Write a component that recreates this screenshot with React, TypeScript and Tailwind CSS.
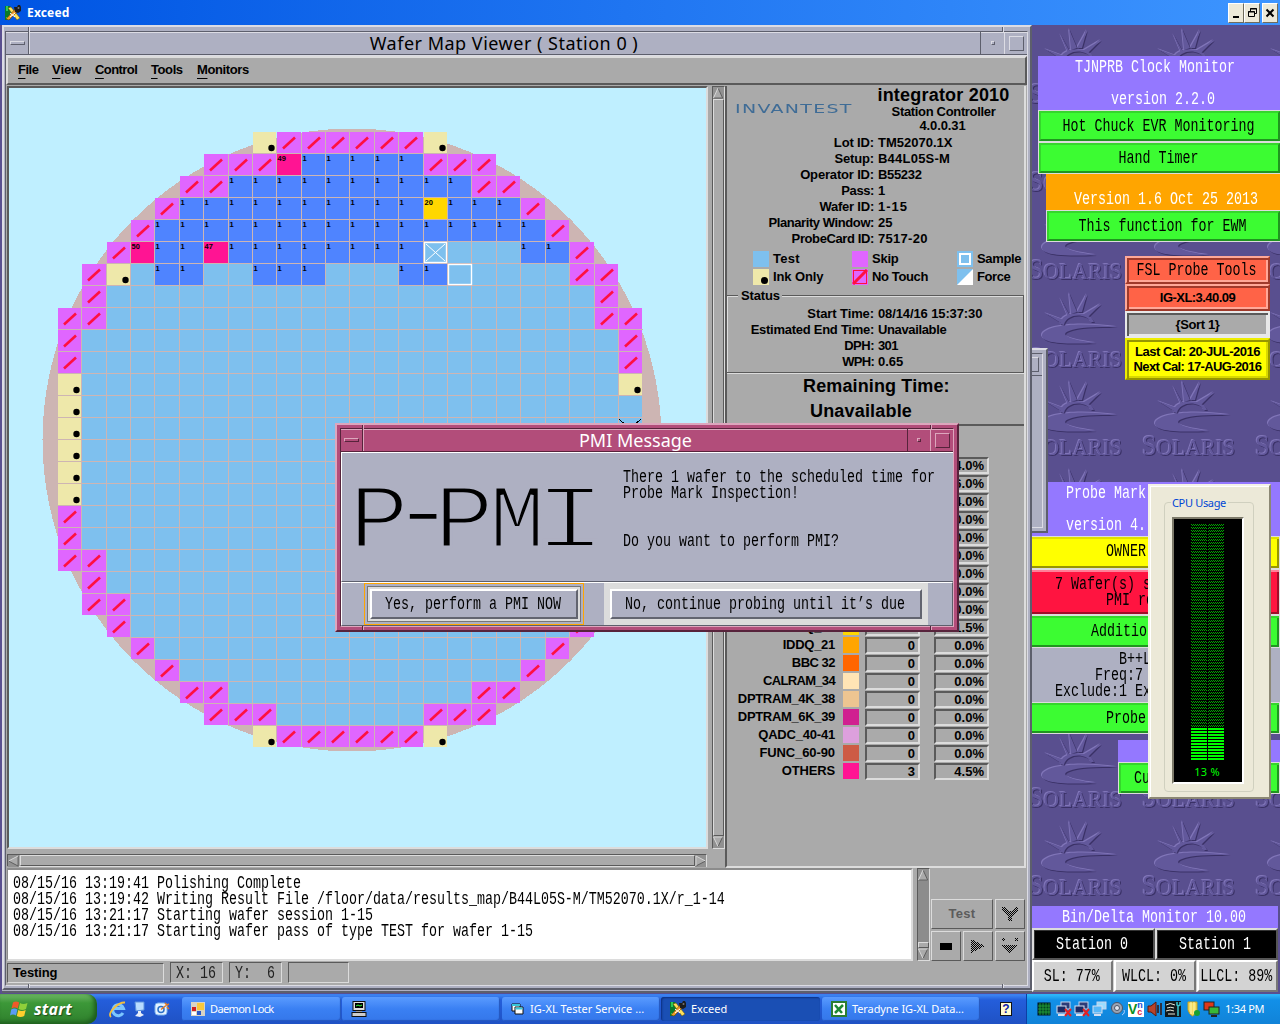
import React, { useLayoutEffect, useRef, useState } from "react";

/* ---------- text helpers ---------- */

// Spreads its text over a fixed width by adjusting letter spacing.
function Fit({ w, children, className = "" }: { w: number; children: string; className?: string }) {
  const ref = useRef<HTMLSpanElement>(null);
  const [ls, setLs] = useState(0);
  useLayoutEffect(() => {
    if (ref.current) {
      const natural = ref.current.offsetWidth;
      setLs((w - natural) / Math.max(1, children.length));
    }
  }, []);
  return (
    <span ref={ref} className={"inline-block shrink-0 whitespace-pre " + className} style={{ letterSpacing: ls }}>
      {children}
    </span>
  );
}

function M({ children, className = "" }: { children: string; className?: string }) {
  return (
    <span
      className={
        "block h-4 w-max shrink-0 origin-[50%_40%] scale-y-[1.36] font-['Liberation_Mono',monospace] text-[13.33px] leading-4 whitespace-pre " +
        className
      }
    >
      {children}
    </span>
  );
}

function B({ w, children, className = "" }: { w: number; children: string; className?: string }) {
  return (
    <Fit w={w} className={"font-['Liberation_Sans',sans-serif] text-[13px] leading-4 font-bold " + className}>
      {children}
    </Fit>
  );
}

/* ---------- wafer map ---------- */

type Kind = "t" | "s" | "i" | "b" | "p" | "g";
const FILL: Record<Kind, string> = {
  t: "#7ec0ee",
  s: "#e066ff",
  i: "#eee8aa",
  b: "#4f84ff",
  p: "#ff1493",
  g: "#ffd700",
};

// One string per row; a dot is a position off the wafer.
const ROWS = [
  "........issssssi........",
  "......ssspbbbbbsss......",
  ".....ssbbbbbbbbbbss.....",
  "....sbbbbbbbbbbgbbbs....",
  "...sbbbbbbbbbbbbbbbbs...",
  "..spbbpbbbbbbbbttttbbs..",
  ".sitbbttbbbtttbbtttttss.",
  ".stttttttttttttttttttts.",
  "ssttttttttttttttttttttss",
  "stttttttttttttttttttttts",
  "stttttttttttttttttttttts",
  "itttttttttttttttttttttti",
  "ittttttttttttttttttttttt",
  "ittttttttttttttttttttttt",
  "itttttttttttttttttttttti",
  "itttttttttttttttttttttti",
  "itttttttttttttttttttttti",
  "stttttttttttttttttttttts",
  "stttttttttttttttttttttts",
  "ssttttttttttttttttttttss",
  ".stttttttttttttttttttts.",
  ".ssttttttttttttttttttss.",
  "..stttttttttttttttttts..",
  "...stttttttttttttttts...",
  "....stttttttttttttts....",
  ".....ssttttttttttss.....",
  "......sssttttttsss......",
  "........issssssi........",
];

const LABELS: Record<string, string> = { "1-9": "49", "3-15": "20", "5-3": "50", "5-6": "47" };
const colX = (c: number) => Math.round(57.7 + 24.4 * c);

function WaferMap() {
  return (
    <svg width="697" height="759" className="block bg-[#bfefff]" shapeRendering="crispEdges">
      <g transform="translate(-9 -88)">
        <ellipse cx="352" cy="440" rx="309.500" ry="311.500" fill="#cdb5b3" />
        {ROWS.map((row, r) =>
          row.split("").map((k, c) => {
            if (k === ".") return null;
            const x = colX(c);
            const w = colX(c + 1) - x - 1;
            const y = 132 + 22 * r;
            const label = LABELS[r + "-" + c] ?? (k === "b" ? "1" : null);
            return (
              <g key={r + "-" + c}>
                <rect x={x} y={y} width={w} height={21} fill={FILL[k as Kind]} />
                {k === "s" && (
                  <path
                    d={`M${x + 6} ${y + 16.5}L${x + 18} ${y + 5.5}`}
                    stroke="#ff1040"
                    strokeWidth="2.600"
                    shapeRendering="auto"
                  />
                )}
                {k === "i" && <circle cx={x + w - 4.5} cy={y + 16} r="3.200" fill="#000" shapeRendering="auto" />}
                {label && (
                  <text
                    x={x + 0.5}
                    y={y + 6.5}
                    fontSize="7.500"
                    fontWeight="bold"
                    fontFamily="'Liberation Sans', sans-serif"
                    fill="#000"
                  >
                    {label}
                  </text>
                )}
              </g>
            );
          }),
        )}
        {ROWS.slice(0, -1).map((row, r) => {
          const cols = row
            .split("")
            .map((k, c) => (k !== "." && ROWS[r + 1][c] !== "." ? c : -1))
            .filter((c) => c >= 0);
          const a = colX(cols[0]);
          const b = colX(cols[cols.length - 1] + 1);
          return <path key={r} d={`M${a} ${153.5 + 22 * r}H${b}`} stroke="#cdb5b3" strokeWidth="1" fill="none" />;
        })}
        <g fill="none" stroke="#fff" strokeWidth="1.400" shapeRendering="auto">
          <rect x="424.500" y="242.500" width="22" height="20" />
          <path d="M426 244L445 261M445 244L426 261" strokeWidth="1" />
          <rect x="448.500" y="264.500" width="23" height="20" />
        </g>
        <path d="M619 419l22 20M641 419l-22 20" stroke="#000" fill="none" />
      </g>
    </svg>
  );
}

/* ---------- Solaris backdrop ---------- */

const SUN =
  "M19 31c1-13 29-15 34-2l-3 0c-6-10-25-8-27 3zM4 20l19 7-3 3zM19 5l10 18-2 1zM28 0l8 19-6 2zM46 1l-5 18-5 0zM60 11l-13 13-4-3zM76 34c-34-5-72-3-75 8-1 7 16 10 54 8-24-3-38-8-27-12 9-4 26-4 48-4z";

function Backdrop() {
  const tiles: { x: number; y: number; name: boolean }[] = [];
  for (let r = 0; r < 10; r++)
    for (let c = 0; c < 3; c++)
      tiles.push({ x: 9 + 113 * c, y: 3 + 88 * r, name: r < 2 ? c === 0 : r < 4 ? c !== 1 : r < 5 || r > 7 });
  return (
    <svg width="248" height="968" viewBox="0 0 248 968" className="block bg-[#594f8f]">
      {tiles.map((t, i) => (
        <g
          key={i}
          transform={`translate(${t.x} ${t.y})`}
          fill="#62589b"
          className="[filter:drop-shadow(1px_1px_0_#3a3166)_drop-shadow(-1px_-1px_0_#8075b8)]"
        >
          <path d={SUN} />
          {t.name && (
            <text
              x="-12"
              y="74"
              fontFamily="'Liberation Serif', serif"
              fontSize="29"
              textLength="93"
              lengthAdjust="spacingAndGlyphs"
            >
              S<tspan fontSize="24">OLARIS</tspan>
            </text>
          )}
        </g>
      ))}
    </svg>
  );
}

/* ---------- Motif parts ---------- */

const OUT = "border-t-[#dcdcdc] border-l-[#dcdcdc] border-b-[#5a5a5a] border-r-[#5a5a5a] ";
const IN = "border-t-[#5a5a5a] border-l-[#5a5a5a] border-b-[#dcdcdc] border-r-[#dcdcdc] ";
const BL_OUT = "border-t-[#dcdce4] border-l-[#dcdce4] border-b-[#5d5f6c] border-r-[#5d5f6c] ";
const BL_IN = "border-t-[#5d5f6c] border-l-[#5d5f6c] border-b-[#dcdce4] border-r-[#dcdce4] ";
const PK_OUT = "border-t-[#dda6bd] border-l-[#dda6bd] border-b-[#57233b] border-r-[#57233b] ";
const PK_IN = "border-t-[#57233b] border-l-[#57233b] border-b-[#dda6bd] border-r-[#dda6bd] ";

function Arrow({ dir }: { dir: "up" | "down" | "left" | "right" }) {
  const shape = {
    up: ["M5.500 .5L10.500 11.500H.5Z", "M.5 11.500L5.500 .5", "M5.500 .5L10.500 11.500H.5"],
    down: ["M.5 .5H10.500L5.500 11Z", "M5.500 11L.5 .5H10.500", "M10.500 .5L5.500 11"],
    left: ["M.5 6L11 .5V11.500Z", "M.5 6L11 .5", "M.5 6L11 11.500V.5"],
    right: ["M1 .5L11.500 6L1 11.500Z", "M1 11.500V.5L11.500 6", "M11.500 6L1 11.500"],
  }[dir];
  return (
    <svg width="11" height="12" viewBox="0 0 12 12" className="block shrink-0 bg-[#919191]">
      <path d={shape[0]} fill="#aaa" />
      <path d={shape[2]} fill="none" stroke="#5a5a5a" />
      <path d={shape[1]} fill="none" stroke="#dcdcdc" />
    </svg>
  );
}

function GreenButton({ children, className = "" }: { children: React.ReactNode; className?: string }) {
  return (
    <div className={"flex border border-r-0 border-[#dcdcdc] bg-[#3cfc32] " + className}>
      <div className="flex flex-1 items-center justify-center border-2 border-t-[#35d62c] border-l-[#35d62c] border-r-[#1f961f] border-b-[#1f961f]">
        {children}
      </div>
    </div>
  );
}

/* ---------- side panel ---------- */

const INFO: [string, number, string, number][] = [
  ["Lot ID:", 40, "TM52070.1X", 74],
  ["Setup:", 39, "B44L05S-M", 72],
  ["Operator ID:", 74, "B55232", 44],
  ["Pass:", 33, "1", 6],
  ["Wafer ID:", 55, "1-15", 30],
  ["Planarity Window:", 106, "25", 14],
  ["ProbeCard ID:", 82, "7517-20", 50],
];
const STATUS: [string, number, string, number][] = [
  ["Start Time:", 67, "08/14/16 15:37:30", 104],
  ["Estimated End Time:", 123, "Unavailable", 68],
  ["DPH:", 30, "301", 20],
  ["WPH:", 32, "0.65", 25],
];
const BINS: [string, number, string, string, string][] = [
  ["", 0, "#aaaaaa", "", "4.0%"],
  ["", 0, "#aaaaaa", "", "6.0%"],
  ["", 0, "#aaaaaa", "", "4.0%"],
  ["", 0, "#aaaaaa", "", "0.0%"],
  ["", 0, "#aaaaaa", "", "0.0%"],
  ["", 0, "#aaaaaa", "", "0.0%"],
  ["", 0, "#aaaaaa", "", "0.0%"],
  ["", 0, "#aaaaaa", "", "0.0%"],
  ["", 0, "#aaaaaa", "", "0.0%"],
  ["IDDQ_20", 52, "#ffd700", "1", "1.5%"],
  ["IDDQ_21", 52, "#ffa500", "0", "0.0%"],
  ["BBC 32", 43, "#ff6600", "0", "0.0%"],
  ["CALRAM_34", 72, "#ffe4b5", "0", "0.0%"],
  ["DPTRAM_4K_38", 97, "#edc591", "0", "0.0%"],
  ["DPTRAM_6K_39", 97, "#d02090", "0", "0.0%"],
  ["QADC_40-41", 77, "#dda0dd", "0", "0.0%"],
  ["FUNC_60-90", 76, "#cd5b45", "0", "0.0%"],
  ["OTHERS", 53, "#ff1493", "3", "4.5%"],
];

function InfoRows({ rows }: { rows: typeof INFO }) {
  return (
    <>
      {rows.map((r) => (
        <div key={r[0]} className="flex h-4">
          <div className="flex w-[147px] shrink-0 justify-end">
            <B w={r[1]}>{r[0]}</B>
          </div>
          <B w={r[3]} className="ml-1">
            {r[2]}
          </B>
        </div>
      ))}
    </>
  );
}

function LegendItem({ children, label, w }: { children: React.ReactNode; label: string; w: number }) {
  return (
    <div className="flex h-4 items-center gap-1">
      <svg width="16" height="16" viewBox="0 0 16 16" className="block">
        {children}
      </svg>
      <B w={w}>{label}</B>
    </div>
  );
}

function SidePanel() {
  return (
    <div className="flex h-[781px] w-[299px] flex-col border-r-2 border-r-[#dcdcdc]">
      <div className="flex h-[49px]">
        <div className="w-[139px] pt-[9px] pl-[8px]">
          <Fit
            w={81}
            className="origin-left scale-x-[1.46] font-['DejaVu_Sans',sans-serif] text-[13px] leading-4 font-normal text-[#3f6c96]"
          >
            INVANTEST
          </Fit>
        </div>
        <div className="flex w-[150px] flex-col items-center pl-[5px]">
          <Fit w={132} className="-mt-px font-['Liberation_Sans',sans-serif] text-[18px] leading-5 font-bold">
            integrator 2010
          </Fit>
          <B w={104} className="-mt-px">
            Station Controller
          </B>
          <B w={46} className="-mt-0.5 mr-[2px]">
            4.0.0.31
          </B>
        </div>
      </div>
      <InfoRows rows={INFO} />
      <div className="mt-1 grid h-[34px] grid-cols-[99px_105px_80px] gap-y-0.5 pl-[26px]">
        <LegendItem label="Test" w={27}>
          <rect width="16" height="16" fill="#7ec0ee" />
        </LegendItem>
        <LegendItem label="Skip" w={26}>
          <rect width="16" height="16" fill="#e066ff" />
        </LegendItem>
        <LegendItem label="Sample" w={44}>
          <rect width="16" height="16" fill="#7ec0ee" />
          <rect x="3" y="3" width="10" height="10" fill="none" stroke="#fff" strokeWidth="2" />
        </LegendItem>
        <LegendItem label="Ink Only" w={50}>
          <rect width="16" height="16" fill="#eee8aa" />
          <circle cx="11.500" cy="11.500" r="3.500" />
        </LegendItem>
        <LegendItem label="No Touch" w={56}>
          <rect width="16" height="16" fill="#e066ff" />
          <rect x="1.500" y="1.500" width="13" height="13" fill="none" stroke="#ff1040" />
          <path d="M1 15L15 1" stroke="#ff1040" strokeWidth="3" />
        </LegendItem>
        <LegendItem label="Force" w={33}>
          <rect width="16" height="16" fill="#fff" />
          <path d="M0 0H16L0 16Z" fill="#7ec0ee" />
        </LegendItem>
      </div>
      <div className="mt-[10px] -ml-px h-[78px] border border-[#5a5a5a] shadow-[inset_1px_1px_#dcdcdc,1px_1px_#dcdcdc]">
        <div className="-mt-2 ml-[11px] flex h-[18px] w-11 bg-[#aaa] pl-[3px]">
          <B w={39}>Status</B>
        </div>
        <InfoRows rows={STATUS} />
      </div>
      <div className="flex h-[53px] shrink-0 flex-col items-start border-b-2 border-b-[#5a5a5a] pt-px text-[18px]">
        <Fit w={147} className="ml-[76px] font-['Liberation_Sans',sans-serif] leading-[25px] font-bold">
          Remaining Time:
        </Fit>
        <Fit w={102} className="ml-[83px] font-['Liberation_Sans',sans-serif] leading-[25px] font-bold">
          Unavailable
        </Fit>
      </div>
      <div className="flex-1 pt-[31px]">
        {BINS.map((b, i) => (
          <div key={i} className="flex h-[18px] items-start">
            <div className="flex w-[108px] shrink-0 justify-end">{b[0] && <B w={b[1]}>{b[0]}</B>}</div>
            <div className="ml-2 h-4 w-4" style={{ backgroundColor: b[2] }} />
            <div className={"ml-1.5 flex h-[17px] w-[55px] justify-end border-2 pr-0.5 leading-[14px] " + IN}>
              <B w={8} className="-mt-px">
                {b[3]}
              </B>
            </div>
            <div className={"ml-3.5 flex h-[17px] w-[55px] justify-end border-2 pr-[3px] leading-[14px] " + IN}>
              <B w={30} className="-mt-px">
                {b[4]}
              </B>
            </div>
          </div>
        ))}
      </div>
    </div>
  );
}

/* ---------- main window ---------- */

const LOG = [
  "08/15/16 13:19:41 Polishing Complete",
  "08/15/16 13:19:42 Writing Result File /floor/data/results_map/B44L05S-M/TM52070.1X/r_1-14",
  "08/15/16 13:21:17 Starting wafer session 1-15",
  "08/15/16 13:21:17 Starting wafer pass of type TEST for wafer 1-15",
];

function Dither({ d }: { d: string }) {
  return (
    <svg width="16" height="18" viewBox="0 0 16 18">
      <defs>
        <pattern id="dots" width="4" height="2" patternUnits="userSpaceOnUse">
          <rect width="1" height="1" />
          <rect x="2" width="1" height="1" />
          <rect x="1" y="1" width="1" height="1" />
          <rect x="3" y="1" width="1" height="1" />
        </pattern>
      </defs>
      <path d={d} fill="url(#dots)" shapeRendering="crispEdges" />
    </svg>
  );
}

function MainWindow() {
  const menus: [string, number][] = [
    ["File", 20],
    ["View", 29],
    ["Control", 42],
    ["Tools", 32],
    ["Monitors", 52],
  ];
  return (
    <div
      className={
        "absolute top-[25px] left-[2px] h-[965px] w-[1030px] border-2 bg-[#aeb0c2] pt-1 pr-[2px] pl-px shadow-[0_1px_#aeb0c2,0_3px_#5d5f6c] " +
        BL_OUT
      }
    >
      <span className="absolute top-0 left-[24px] h-[5px] w-0.5 border-l border-l-[#5d5f6c] bg-[#dcdce4]" />
      <span className="absolute top-0 left-[998px] h-[5px] w-0.5 border-l border-l-[#5d5f6c] bg-[#dcdce4]" />
      <span className="absolute bottom-0 left-[24px] h-[4px] w-0.5 border-l border-l-[#5d5f6c] bg-[#dcdce4]" />
      <span className="absolute bottom-0 left-[998px] h-[4px] w-0.5 border-l border-l-[#5d5f6c] bg-[#dcdce4]" />
      <div className={"flex h-[955px] flex-col border " + BL_IN}>
        {/* title */}
        <div className={"flex h-[23px] shrink-0 border-b border-b-[#5d5f6c] shadow-[inset_0_1px_#dcdce4]"}>
          <div className="flex w-[23px] items-center justify-center border-r border-r-[#5d5f6c]">
            <div className={"h-1 w-[15px] border " + BL_OUT} />
          </div>
          <div className="flex flex-1 items-center justify-center border-l border-l-[#dcdce4]">
            <Fit w={269} className="-ml-0.5 font-['Noto_Sans',sans-serif] text-[18px] leading-[22px]">
              Wafer Map Viewer ( Station 0 )
            </Fit>
          </div>
          <div className="flex w-[24px] items-center justify-center border-l border-l-[#5d5f6c]">
            <div className={"h-1 w-1 border " + BL_OUT} />
          </div>
          <div className="flex w-[23px] items-center justify-center border-l border-l-[#dcdce4]">
            <div className={"h-[15px] w-[15px] border " + BL_OUT} />
          </div>
        </div>
        {/* client */}
        <div className="flex flex-1 flex-col border-t border-t-[#dcdce4] bg-[#aaaaaa]">
          <div className={"flex h-[29px] shrink-0 items-start border-2 pt-1 pl-2.5 " + OUT}>
            {menus.map(([m, w], i) => (
              <span key={m} className={"flex " + ["w-[34px]", "w-[43px]", "w-[56px]", "w-[46px]", "w-[60px]"][i]}>
                <B w={w} className="underline-offset-4 first-letter:underline">
                  {m}
                </B>
              </span>
            ))}
          </div>
          <div className="mt-px flex h-[782px] shrink-0">
            <div className="flex w-[719px] shrink-0 flex-col pl-px">
              <div className="flex h-[763px]">
                <div className={"w-[701px] shrink-0 border-2 " + IN}>
                  <WaferMap />
                </div>
                <div className={"ml-[4px] flex w-[13px] shrink-0 flex-col border " + IN}>
                  <Arrow dir="up" />
                  <div className={"flex-1 border bg-[#aaa] " + OUT} />
                  <Arrow dir="down" />
                </div>
              </div>
              <div className={"mt-[5px] flex h-[13px] w-[700px] items-center border " + IN}>
                <Arrow dir="left" />
                <div className={"ml-px flex-1 self-stretch border " + OUT} />
                <Arrow dir="right" />
              </div>
            </div>
            <div className="border-b-2 border-l-2 border-b-[#dcdcdc] border-l-[#5a5a5a]">
              <SidePanel />
            </div>
          </div>
          <div className="flex h-[93px] shrink-0 pl-px">
            <div className="h-[93px] w-[906px] border-t-2 border-r-2 border-b-2 border-l border-[#8c8c8c] border-r-[#dcdcdc] border-b-[#dcdcdc] bg-white pt-[5px] pl-[5px]">
              {LOG.map((l) => (
                <M key={l}>{l}</M>
              ))}
            </div>
            <div className={"ml-1 flex w-[13px] flex-col border " + IN}>
              <Arrow dir="up" />
              <div className="flex-1 bg-[#8c8c8c]" />
              <div className={"h-[6px] border bg-[#aaa] " + OUT} />
              <Arrow dir="down" />
            </div>
            <div className="mt-[31px] ml-px grid h-[62px] w-[94px] grid-cols-[30px_30px_30px] grid-rows-[30px_30px] gap-x-[2px] gap-y-[2px]">
              <div className={"col-span-2 flex items-center justify-center border " + OUT}>
                <Fit w={27} className="font-['Liberation_Sans',sans-serif] text-[13px] leading-4 font-bold text-[#5c5c5c]">
                  Test
                </Fit>
              </div>
              <div className={"flex items-center justify-center border " + OUT}>
                <Dither d="M0 2h3l4 4h2l4-4h3v3l-6 6v5H6v-5L0 5z" />
              </div>
              <div className={"flex items-center justify-center border " + OUT}>
                <div className="h-[7px] w-3 bg-black" />
              </div>
              <div className={"flex items-center justify-center border " + OUT}>
                <Dither d="M1 2L15 9L1 16z" />
              </div>
              <div className={"flex items-center justify-center border " + OUT}>
                <Dither d="M0 1h3v3H0zM13 1h3v3h-3zM0 8h16l-8 9z" />
              </div>
            </div>
          </div>
          <div className="flex items-start pl-px">
            <div className={"mt-0.5 flex h-[20px] w-[157px] items-center border pl-[5px] " + IN}>
              <B w={44}>Testing</B>
            </div>
            <div className={"mt-px ml-[6px] flex h-[21px] w-[53px] items-center border pl-[5px] " + IN}>
              <M className="text-[#222]">X: 16</M>
            </div>
            <div className={"mt-px ml-[6px] flex h-[21px] w-[53px] items-center border pl-[5px] " + IN}>
              <M className="text-[#222]">Y:  6</M>
            </div>
            <div className={"mt-px ml-[6px] h-[21px] w-[61px] border " + IN} />
          </div>
        </div>
      </div>
    </div>
  );
}

/* ---------- PMI dialog ---------- */

function Dialog() {
  return (
    <div className={"absolute top-[423px] left-[335px] h-[209px] w-[624px] border-2 bg-[#b24d7a] p-[3px] " + PK_OUT}>
      <span className="absolute top-0 left-[25px] h-1 w-0.5 border-l border-l-[#57233b] bg-[#dda6bd]" />
      <span className="absolute top-0 right-[25px] h-1 w-0.5 border-l border-l-[#57233b] bg-[#dda6bd]" />
      <span className="absolute bottom-0 left-[25px] h-1 w-0.5 border-l border-l-[#57233b] bg-[#dda6bd]" />
      <span className="absolute right-[25px] bottom-0 h-1 w-0.5 border-l border-l-[#57233b] bg-[#dda6bd]" />
      <div className={"flex h-[199px] flex-col border " + PK_IN}>
        <div className="flex h-[23px] shrink-0 border-b border-b-[#57233b] shadow-[inset_0_1px_#dda6bd]">
          <div className="flex w-[22px] items-center justify-center border-r border-r-[#57233b]">
            <div className={"h-1 w-[15px] border " + PK_OUT} />
          </div>
          <div className="flex flex-1 items-center justify-center border-l border-l-[#dda6bd]">
            <Fit w={113} className="font-['Noto_Sans',sans-serif] text-[18px] leading-[22px] text-white">
              PMI Message
            </Fit>
          </div>
          <div className="flex w-[23px] items-center justify-center border-l border-l-[#57233b]">
            <div className={"h-1 w-1 border " + PK_OUT} />
          </div>
          <div className="flex w-[23px] items-center justify-center border-l border-l-[#dda6bd]">
            <div className={"h-[15px] w-[15px] border " + PK_OUT} />
          </div>
        </div>
        <div className="flex h-[130px] shrink-0 border-t border-b border-l border-t-white border-b-[#5d5f6c] border-l-white bg-[#aeb0c2]">
          <div className="flex w-[281px] pt-[22px] pl-[10px] font-['Liberation_Mono',monospace] text-[90px] leading-[96px] whitespace-nowrap [-webkit-text-stroke:3px_#aeb0c2]">
            <span className="w-[53px] scale-x-110">P</span>
            <span className="-mt-[6px] -ml-[10px] w-[42px] scale-x-[1.2] [-webkit-text-stroke:2.4px_#aeb0c2]">-</span>
            <span className="w-[53px] scale-x-110">P</span>
            <span className="w-[53px] scale-x-[1.04]">M</span>
            <span className="w-[53px] scale-x-[1.36] [-webkit-text-stroke:3.8px_#aeb0c2]">I</span>
          </div>
          <div className="pt-4">
            <M>There 1 wafer to the scheduled time for</M>
            <M>Probe Mark Inspection!</M>
            <M className="mt-8">Do you want to perform PMI?</M>
          </div>
        </div>
        <div className="flex h-[44px] shrink-0 border border-t-white border-r-[#5d5f6c] border-b-[#5d5f6c] border-l-white bg-[#aeb0c2] pl-[22px]">
          <div className="flex h-[42px] w-[220px] border border-[#ffa500] p-[2px]">
            <div className="flex flex-1 border border-[#777] bg-[#dcdcdc] p-[2px]">
              <div className="flex flex-1 items-center justify-center border-2 border-t-white border-r-[#62646f] border-b-[#62646f] border-l-white bg-[#aeb0c2]">
                <M className="-ml-0.5">Yes, perform a PMI NOW</M>
              </div>
            </div>
          </div>
          <div className="ml-5 flex h-[42px] w-[324px] bg-[#dcdcdc] p-[6px]">
            <div className="flex flex-1 items-center justify-center border-2 border-t-white border-r-[#62646f] border-b-[#62646f] border-l-white bg-[#aeb0c2]">
              <M className="-ml-0.5">No, continue probing until it’s due</M>
            </div>
          </div>
        </div>
      </div>
    </div>
  );
}

/* ---------- desktop monitors ---------- */

function ClockMonitor() {
  return (
    <>
      <div className="absolute top-[56px] left-[1038px] h-[118px] w-[242px]">
        <div className="h-[54px] bg-[#9478ff] pt-[3px] text-white">
          <M className="ml-[37px]">TJNPRB Clock Monitor</M>
          <M className="mt-4 ml-[73px]">version 2.2.0</M>
        </div>
        <GreenButton className="h-8">
          <M className="-ml-0.5">Hot Chuck EVR Monitoring</M>
        </GreenButton>
        <GreenButton className="h-8">
          <M className="-ml-0.5">Hand Timer</M>
        </GreenButton>
      </div>
      <div className="absolute top-[174px] left-[1046px] w-[234px]">
        <div className="h-[36px] bg-[#ffa500] pt-[17px] pl-[28px] text-white">
          <M>Version 1.6 Oct 25 2013</M>
        </div>
        <GreenButton className="h-8">
          <M className="-ml-0.5">This function for EWM</M>
        </GreenButton>
      </div>
    </>
  );
}

function ProbeTools() {
  const red =
    "flex items-center justify-center border-2 border-t-[#ffa898] border-l-[#ffa898] border-r-[#a03a2b] border-b-[#a03a2b] bg-[#ff6347] shadow-[inset_2px_2px_#a03a2b,inset_-2px_-2px_#ffa898] ";
  return (
    <div className="absolute top-[256px] left-[1125px] w-[145px] font-['Liberation_Sans',sans-serif] text-[13px] leading-[15px] font-bold">
      <div className={red + "h-7 font-normal"}>
        <M className="-ml-0.5">FSL Probe Tools</M>
      </div>
      <div className={red + "h-[27px]"}>
        <Fit w={75}>IG-XL:3.40.09</Fit>
      </div>
      <div className="flex h-[27px] items-center justify-center border-2 border-[#e8e8e8] bg-[#aaa] shadow-[inset_2px_2px_#5a5a5a,inset_-2px_-2px_#e8e8e8]">
        <Fit w={44}>{"{Sort 1}"}</Fit>
      </div>
      <div className="flex h-[42px] flex-col items-center justify-center border-2 border-t-[#eded00] border-r-[#979700] border-b-[#979700] border-l-[#eded00] bg-[#ffff00] shadow-[inset_2px_2px_#979700,inset_-2px_-2px_#d8d800]">
        <Fit w={125}>Last Cal: 20-JUL-2016</Fit>
        <Fit w={128}>Next Cal: 17-AUG-2016</Fit>
      </div>
    </div>
  );
}

function ProbeMark() {
  return (
    <>
      <div className="absolute top-[482px] left-[1031px] w-[249px]">
        <div className="h-[54px] bg-[#9478ff] pt-[3px] pl-[35px] text-white">
          <M>Probe Mark</M>
          <M className="mt-4">version 4.</M>
        </div>
        <div className="h-[33px] border border-[#dcdcdc] bg-[#ffff00] pt-[6px] pl-[74px] shadow-[inset_0_2px_#e0e000,inset_-2px_-2px_#979700]">
          <M>OWNER</M>
        </div>
        <div className="h-[46px] border border-[#dcdcdc] bg-[#ff1440] pt-[6px] pl-[23px] shadow-[inset_0_2px_#ff8098,inset_-2px_-2px_#a00c28]">
          <M>7 Wafer(s) s</M>
          <M className="ml-[51px]">PMI re</M>
        </div>
        <div className="h-[33px] border border-[#dcdcdc] bg-[#3cfc32] pt-[7px] pl-[59px] shadow-[inset_0_2px_#35d62c,inset_-2px_-2px_#1f961f]">
          <M>Addition</M>
        </div>
        <div className="h-[54px] bg-[#aeb0c2] pt-[3px] pl-[24px]">
          <M className="ml-16">B++L</M>
          <M className="ml-10">Freq:7</M>
          <M>Exclude:1 Ex</M>
        </div>
        <div className="h-[32px] border border-[#dcdcdc] bg-[#3cfc32] pt-[7px] pl-[74px] shadow-[inset_0_2px_#35d62c,inset_-2px_-2px_#1f961f]">
          <M>Probe</M>
        </div>
      </div>
      <div className="absolute top-[740px] left-[1118px] w-[162px]">
        <div className="h-[22px] bg-[#9478ff]" />
        <div className="h-[32px] border border-[#dcdcdc] bg-[#3cfc32] pt-[7px] pl-[15px] shadow-[inset_2px_2px_#35d62c,inset_-2px_-2px_#1f961f]">
          <M>Cu</M>
        </div>
      </div>
    </>
  );
}

function CpuWindow() {
  const bars = Array.from({ length: 11 }, (_, i) => i);
  return (
    <div className="absolute top-[484px] left-[1148px] h-[315px] w-[123px] border-2 border-t-[#f4f2e8] border-r-[#8b8774] border-b-[#8b8774] border-l-[#f4f2e8] bg-[#ece9d8] pt-[16px] pl-[14px] shadow-[inset_1px_1px_#fff]">
      <div className="h-[290px] w-[90px] rounded-[4px] border border-[#d0d0bf] px-[6px]">
        <div className="-mt-2 flex h-[15px] w-[57px] bg-[#ece9d8] pl-px">
          <Fit w={54} className="font-['Noto_Sans',sans-serif] text-[11px] leading-[15px] text-[#0046d5]">
            CPU Usage
          </Fit>
        </div>
        <div className="mt-[7px] ml-px flex h-[267px] w-[72px] flex-col items-center border-2 border-t-[#7d7a6a] border-r-white border-b-white border-l-[#7d7a6a] bg-black pt-[5px] pr-[2px]">
          <svg width="33" height="236" viewBox="0 0 33 236" shapeRendering="crispEdges">
            <defs>
              <pattern id="dim" width="2" height="3" patternUnits="userSpaceOnUse">
                <rect width="1" height="1" fill="#00a800" />
                <rect x="1" y="1" width="1" height="1" fill="#00a800" />
              </pattern>
            </defs>
            <path d="M0 0h16v203H0zM17 0h16v203H17z" fill="url(#dim)" />
            {bars.map((i) => (
              <path key={i} d={`M0 ${204 + i * 3}h16v2h-16zM17 ${204 + i * 3}h16v2h-16z`} fill="#00ff00" />
            ))}
          </svg>
          <Fit w={26} className="mt-1 font-['Noto_Sans',sans-serif] text-[11px] leading-[15px] text-[#00ff00]">
            13 %
          </Fit>
        </div>
      </div>
    </div>
  );
}

function BinDelta() {
  const st =
    "flex h-8 items-center border-2 border-t-[#dcdcdc] border-l-[#dcdcdc] border-r-[#555] border-b-[#555] bg-black pl-[22px] text-white shadow-[inset_1px_1px_#333]";
  const cell =
    "flex h-8 items-center justify-center border-2 border-t-white border-l-white border-r-[#777] border-b-[#777] bg-[#d3d3d3]";
  return (
    <div className="absolute top-[906px] left-[1032px] w-[246px]">
      <div className="h-[22px] bg-[#9478ff] pt-[3px] pl-[30px] text-white">
        <M>Bin/Delta Monitor 10.00</M>
      </div>
      <div className="grid grid-cols-2 bg-[#d3d3d3]">
        <div className={st}>
          <M>Station 0</M>
        </div>
        <div className={st}>
          <M>Station 1</M>
        </div>
      </div>
      <div className="grid grid-cols-3 gap-x-px bg-[#d3d3d3]">
        <div className={cell}>
          <M className="-ml-0.5">SL: 77%</M>
        </div>
        <div className={cell}>
          <M className="-ml-0.5">WLCL: 0%</M>
        </div>
        <div className={cell}>
          <M className="-ml-0.5">LLCL: 89%</M>
        </div>
      </div>
    </div>
  );
}

/* ---------- icons ---------- */

function ExceedIcon() {
  return (
    <svg width="16" height="16" viewBox="0 0 16 16" className="block shrink-0">
      <path d="M0 1h5l3 5-3 9H0z" fill="#0a7a2a" />
      <path d="M1 1h2v5H1zM1 12h3v2H1z" fill="#2cc85a" />
      <path d="M3 3l3-1 9 11-3 2z" fill="#ffe15a" stroke="#5c4a00" strokeWidth=".5" />
      <path d="M11 3l3 2L4 15l-3-1z" fill="#f09a28" stroke="#5c3a00" strokeWidth=".5" />
      <path d="M5 8l5 4M5 12l5-4" stroke="#fff" />
      <path d="M9 2h3l1-2h2l1 2v4l-3 2-3-1z" fill="#1c1c1c" />
      <circle cx="13.500" cy="3" r="1" fill="#777" />
    </svg>
  );
}

function WinFlag() {
  return (
    <svg width="19" height="18" viewBox="0 0 19 18" className="block shrink-0">
      <path d="M3 2.500c2-1.500 4-1.500 6.200 0L7.700 8.500c-2-1.300-4-1.300-6.200 0z" fill="#f0592a" />
      <path d="M10 3c2 1.300 4.500 1.300 7.500 0L16 9c-2.500 1.300-5 1.300-7.500 0z" fill="#8fd03a" />
      <path d="M1.200 9.500c2-1.500 4-1.500 6.200 0L6 15.500c-2-1.300-4-1.300-6 0z" fill="#5a9cf5" />
      <path d="M8.300 10c2 1.300 4.700 1.300 7.400 0l-1.500 6c-2.500 1.300-5 1.300-7.400 0z" fill="#ffcf2e" />
    </svg>
  );
}

function Monitors({ cross = false }: { cross?: boolean }) {
  return (
    <svg width="16" height="16" viewBox="0 0 16 16" className="block shrink-0">
      <rect x="5" y="1" width="9" height="7" fill={cross ? "#2c3c78" : "#9adcff"} stroke="#c8d4ea" />
      <rect x="1" y="5" width="9" height="7" fill={cross ? "#1b2a66" : "#58b8f8"} stroke="#d8e0f0" />
      <path d="M2 14h7" stroke="#d8e0f0" strokeWidth="2" />
      {cross && <path d="M9 8l6 7M15 8l-6 7" stroke="#e82020" strokeWidth="2" />}
    </svg>
  );
}

function TaskButton({
  icon,
  label,
  w,
  active = false,
  className = "",
}: {
  icon: React.ReactNode;
  label: string;
  w: number;
  active?: boolean;
  className?: string;
}) {
  return (
    <div
      className={
        "mt-[3px] flex h-[24px] shrink-0 items-center rounded-[3px] pl-[9px] text-white " +
        (active
          ? "bg-[#1a4fb4] shadow-[inset_1px_1px_2px_#0c2f80] "
          : "bg-linear-to-b from-[#5a9bff] via-[#3a80f3] to-[#3577ea] shadow-[inset_-1px_-1px_1px_#2456bd] ") +
        className
      }
    >
      {icon}
      {label && (
        <Fit w={w} className="ml-[5px] font-['Noto_Sans',sans-serif] text-[11px] leading-4">
          {label}
        </Fit>
      )}
    </div>
  );
}

function Taskbar() {
  return (
    <div className="absolute top-[994px] left-0 flex h-[30px] w-[1280px] bg-linear-to-b from-[#3a80f0] from-[5%] via-[#245edb] via-[20%] to-[#1f52c4]">
      <div className="flex w-[97px] shrink-0 items-center rounded-r-[10px] bg-linear-to-b from-[#66b25e] from-[5%] via-[#3c9838] via-[30%] to-[#2f7f2d] pl-[10px] shadow-[inset_-3px_-2px_4px_#1d5c1c]">
        <WinFlag />
        <Fit
          w={38}
          className="ml-[5px] font-['Open_Sans',sans-serif] text-[16px] leading-5 font-bold text-white italic [text-shadow:1px_1px_1px_#1d4d1c]"
        >
          start
        </Fit>
      </div>
      <div className="flex w-[85px] shrink-0 items-center gap-[6px] pl-[12px]">
        <svg width="17" height="17" viewBox="0 0 17 17">
          <path d="M14 12a5.500 5.500 0 1 1 .5-4.500H5" fill="none" stroke="#7cc6ff" strokeWidth="3" />
          <path d="M2 16C-2 12 9 1 16 1.500" fill="none" stroke="#f4bf3c" strokeWidth="1.800" />
        </svg>
        <svg width="16" height="16" viewBox="0 0 16 16">
          <path d="M3 1l9 0v8l-8 1z" fill="#b8dcff" stroke="#5c92dd" />
          <path d="M6 10h3v2l3 2-4 2-5-1 3-3z" fill="#e8eef8" />
        </svg>
        <svg width="16" height="16" viewBox="0 0 16 16">
          <rect x="1" y="2" width="12" height="12" rx="3" fill="#e4f1ff" stroke="#7db4ee" />
          <circle cx="7" cy="8.500" r="3" fill="none" stroke="#2a70c8" strokeWidth="1.500" />
          <path d="M7 8.500l5-4M11 2l2 2 2-1M13 6l2 2" stroke="#e07820" fill="none" strokeWidth="1.500" />
        </svg>
      </div>
      <TaskButton
        className="w-[159px]"
        w={64}
        label="Daemon Lock"
        icon={
          <svg width="14" height="14" viewBox="0 0 14 14" className="block">
            <rect width="14" height="14" fill="#d8d4c4" />
            <rect x="1" y="5" width="4" height="4" fill="#d02020" />
            <rect x="6" y="1" width="7" height="7" fill="#f8c83c" />
            <rect x="1" y="10" width="4" height="3" fill="#fff" />
            <rect x="6" y="9" width="4" height="4" fill="#2858c8" />
          </svg>
        }
      />
      <TaskButton
        className="ml-px w-[158px]"
        w={0}
        label=""
        icon={
          <svg width="16" height="16" viewBox="0 0 16 16" className="block">
            <rect x="2" y=".5" width="12" height="9" fill="#ddd" stroke="#111" />
            <rect x="4" y="2" width="8" height="5" fill="#000" />
            <path d="M5 5l2-1 2 1 2-1" stroke="#3f3" fill="none" />
            <path d="M5 10h6v1.500H5z" fill="#999" />
            <rect x="1" y="11.500" width="14" height="4" fill="#ccc" stroke="#111" />
          </svg>
        }
      />
      <TaskButton
        className="ml-[2px] w-[158px]"
        w={114}
        label="IG-XL Tester Service ..."
        icon={
          <svg width="14" height="14" viewBox="0 0 14 14" className="block">
            <path d="M1 2h8v7H1z" fill="#fff" stroke="#111" />
            <path d="M4 5h8v7H4z" fill="#fff" stroke="#111" />
            <path d="M1 2h8v2H1zM4.500 5.500h7v2h-7z" fill="#38c8d8" />
          </svg>
        }
      />
      <TaskButton className="ml-px w-[159px]" w={36} label="Exceed" active icon={<ExceedIcon />} />
      <TaskButton
        className="ml-[2px] w-[158px]"
        w={112}
        label="Teradyne IG-XL Data..."
        icon={
          <svg width="16" height="16" viewBox="0 0 16 16" className="block">
            <rect width="16" height="16" fill="#2b7d32" />
            <rect x="2" y="2" width="12" height="12" fill="#fff" />
            <path d="M4 4l7 8M12 4l-8 8" stroke="#1f8a33" strokeWidth="2.500" />
          </svg>
        }
      />
      <div className="flex flex-1 items-center justify-center pl-1.5">
        <div className="flex h-[14px] w-3 items-center justify-center border border-[#111] bg-[#fffbd0] font-['Liberation_Sans',sans-serif] text-[12px] leading-3 font-bold text-[#1122aa]">
          ?
        </div>
      </div>
      <div className="flex w-[254px] shrink-0 items-center gap-[2px] border-l border-l-[#0d3fa4] bg-linear-to-b from-[#2cb4f8] from-[4%] via-[#1290e8] via-[20%] to-[#1183d8] pl-[10px]">
        <svg width="14" height="14" viewBox="0 0 14 14" className="mr-[3px] shrink-0">
          <rect x="1" y="1" width="12" height="12" fill="#042" stroke="#012" />
          <path d="M3 1v12M6 1v12M9 1v12M12 1v12M1 4h12M1 7h12M1 10h12" stroke="#2db03c" strokeWidth=".7" />
        </svg>
        <Monitors cross />
        <Monitors cross />
        <Monitors />
        <svg width="16" height="16" viewBox="0 0 16 16" className="shrink-0">
          <circle cx="7" cy="7" r="5.500" fill="#9aa4b4" stroke="#4a5468" />
          <circle cx="7" cy="7" r="2.500" fill="#dfe6f0" stroke="#4a5468" />
          <path d="M12 14c2-1 3-3 2-5" stroke="#b8d0ff" fill="none" />
        </svg>
        <div className="mr-px flex h-[15px] w-4 shrink-0 items-center overflow-hidden bg-white font-['Liberation_Sans',sans-serif] text-[14px] leading-[15px] font-bold text-[#0a8f20]">
          V
          <span className="flex flex-col text-[9px] leading-[7px]">
            <span className="text-[#2050d8]">n</span>
            <span className="text-[#e02040]">c</span>
          </span>
        </div>
        <svg width="16" height="16" viewBox="0 0 16 16" className="shrink-0">
          <path d="M1 5h3l5-4v14l-5-4H1z" fill="#b8432a" stroke="#5e1a0c" />
          <path d="M11 4v8M14 2v12" stroke="#3a1208" strokeWidth="1.500" />
        </svg>
        <svg width="16" height="16" viewBox="0 0 16 16" className="shrink-0">
          <rect width="16" height="16" fill="#10181c" />
          <path d="M1 4q4-3 9 0M2 7q4-1.500 7 0M1 10q4-2 8 0M3 13h7" stroke="#e8e8d8" fill="none" />
          <path d="M12 1v3l1 1v10M15 1v3l-2 1" stroke="#38c8d0" strokeWidth="1.500" fill="none" />
        </svg>
        <svg width="16" height="16" viewBox="0 0 16 16" className="ml-0.5 shrink-0">
          <path d="M3 1h9v8q-1 4-4.500 6Q4 13 3 9z" fill="#f4dc60" stroke="#c8a018" />
          <path d="M6 1v12M9 1v12" stroke="#fff6b0" />
          <circle cx="12" cy="12" r="3" fill="#18a030" />
        </svg>
        <svg width="17" height="16" viewBox="0 0 17 16" className="shrink-0">
          <rect x="1" y="1" width="10" height="8" fill="#e03818" stroke="#222" />
          <rect x="6" y="6" width="10" height="7" fill="#38b838" stroke="#222" />
          <path d="M8 15h6" stroke="#222" strokeWidth="2" />
        </svg>
        <Fit w={39} className="ml-[3px] font-['Noto_Sans',sans-serif] text-[11px] leading-4 text-white">
          1:34 PM
        </Fit>
      </div>
    </div>
  );
}

function TitleBar() {
  const btn =
    "flex h-[20px] w-4 items-center justify-center border border-t-white border-l-white border-r-[#6f6c5c] border-b-[#6f6c5c] bg-[#ece9d8]";
  return (
    <div className="absolute top-0 left-0 flex h-[25px] w-[1280px] items-center bg-linear-to-r from-[#0054e3] to-[#3d95ff] pl-[5px]">
      <ExceedIcon />
      <Fit w={43} className="ml-[6px] font-['Noto_Sans',sans-serif] text-[12px] leading-4 font-bold text-white">
        Exceed
      </Fit>
      <div className="mr-[2px] ml-auto flex">
        <div className={btn}>
          <svg width="10" height="12" viewBox="0 0 10 12">
            <path d="M2 9h6v2H2z" />
          </svg>
        </div>
        <div className={btn}>
          <svg width="11" height="11" viewBox="0 0 11 11" fill="none" stroke="#000">
            <path d="M3.500 4V1.500h6v5H8M3 2h7M1.500 4.500h6v5h-6zM1 5h7" />
          </svg>
        </div>
        <div className={btn + " ml-[2px]"}>
          <svg width="10" height="10" viewBox="0 0 10 10">
            <path d="M1.500 1.500l7 7M8.500 1.500l-7 7" stroke="#000" strokeWidth="2" />
          </svg>
        </div>
      </div>
    </div>
  );
}

export default function App() {
  return (
    <div className="relative h-[1024px] w-[1280px] overflow-hidden bg-[#594f8f] text-black">
      <div className="absolute top-[26px] left-[1032px]">
        <Backdrop />
      </div>
      <ClockMonitor />
      <ProbeTools />
      <ProbeMark />
      <div className={"absolute top-[348px] left-[1020px] h-[185px] w-[28px] border-2 bg-[#aeb0c2] p-[3px] " + BL_OUT}>
        <div className={"h-full border " + BL_IN}>
          <div className={"h-[22px] border-b border-b-[#5d5f6c] pt-[3px]"}>
            <div className={"h-[15px] w-[13px] border " + BL_OUT} />
          </div>
        </div>
      </div>
      <MainWindow />
      <Dialog />
      <CpuWindow />
      <BinDelta />
      <TitleBar />
      <Taskbar />
    </div>
  );
}
